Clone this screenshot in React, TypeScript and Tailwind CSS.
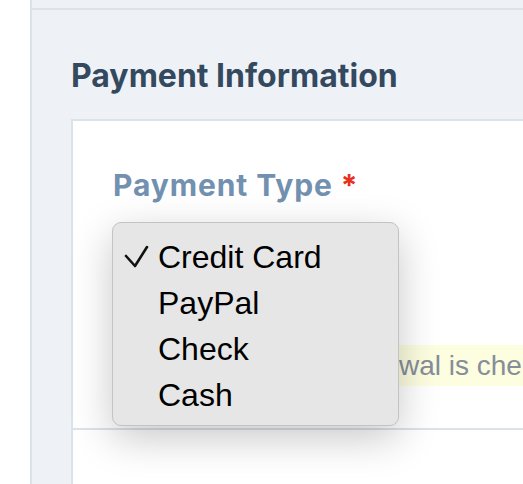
import React from 'react';

const options = ['Credit Card', 'PayPal', 'Check', 'Cash'];

export default function App() {
  const selected = 'Credit Card';

  return (
    <div className="flex h-[484px] w-[523px] overflow-hidden bg-white">
      {/* left gutter */}
      <div className="w-[30px] shrink-0 bg-white" />

      {/* main area */}
      <div className="flex flex-1 flex-col border-l-2 border-[#dbe2ea] bg-[#eef2f7]">
        <div className="h-[10px] border-b-2 border-[#dbe2ea]" />

        <div className="flex flex-1 flex-col pl-[39px] pt-[46px]">
          <h2
            className="text-[32px] font-bold leading-[40px] text-[#34495e]"
            style={{ fontFamily: 'Inter, "Liberation Sans", sans-serif' }}
          >
            Payment Information
          </h2>

          {/* card */}
          <div className="relative mt-[23px] flex-1 border-l-2 border-t-2 border-[#dbe2ea] bg-white">
            <div className="border-b-2 border-[#dbe2ea] pb-[42px] pt-[46px]">
              <div
                className="pl-[40px] text-[30px] font-bold leading-[36px] tracking-[0.9px] text-[#7290b0]"
                style={{ fontFamily: 'Inter, "Liberation Sans", sans-serif' }}
              >
                Payment Type <span className="text-[#e8301c]">*</span>
              </div>

              {/* underlying select, hidden by the open menu */}
              <div className="ml-[41px] mt-[22px] h-[56px] w-[280px] rounded-md bg-white" />

              {/* help text */}
              <div
                className="ml-[41px] mt-[64px] flex h-[41px] items-center overflow-hidden whitespace-nowrap bg-[#fdfde0] text-[28px] text-[#858e99]"
                style={{ fontFamily: '"Liberation Sans", Arial, sans-serif' }}
              >
                <span className="inline-block w-[285px] shrink-0 text-right">Automatic rene</span>
                <span>wal is checked</span>
              </div>
            </div>

            {/* open dropdown menu */}
            <div
              className="absolute left-[39px] top-[101px] w-[287px] rounded-[9px] border border-[#c3c3c3] bg-[#e6e6e6] pb-[7px] pt-[11px] shadow-[0_12px_40px_rgba(0,0,0,0.22)]"
              style={{ fontFamily: '"Liberation Sans", Arial, sans-serif' }}
            >
              {options.map((o) => (
                <div key={o} className="flex h-[46px] items-center text-[32px] text-black">
                  <span className="flex w-[45px] pl-[11px]">
                    {o === selected && (
                      <svg width="26" height="24" viewBox="0 0 26 24">
                        <polyline
                          points="2,11 11,21 23,2"
                          fill="none"
                          stroke="#111"
                          strokeWidth="2.6"
                          strokeLinecap="round"
                          strokeLinejoin="round"
                        />
                      </svg>
                    )}
                  </span>
                  <span className="leading-none">{o}</span>
                </div>
              ))}
            </div>
          </div>
        </div>
      </div>
    </div>
  );
}
